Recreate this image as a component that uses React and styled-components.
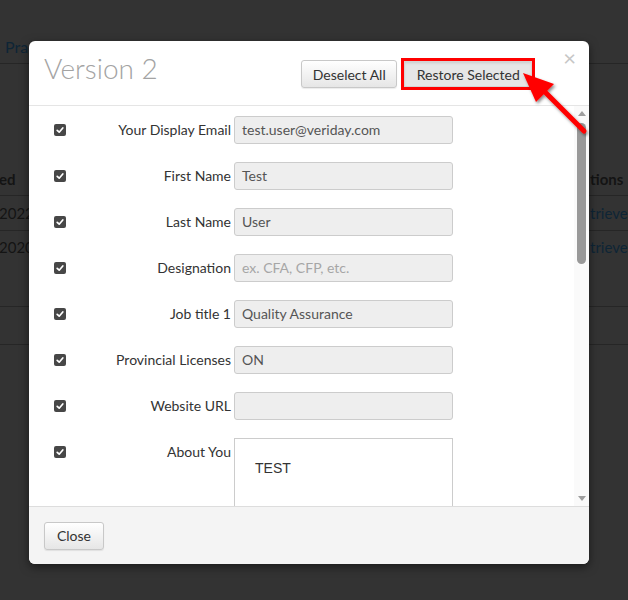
import React from "react";
import styled, { createGlobalStyle } from "styled-components";

const GlobalStyle = createGlobalStyle`
  html, body { margin: 0; padding: 0; }
  body {
    width: 628px;
    height: 600px;
    overflow: hidden;
    background: #333333;
    font-family: Lato, "Open Sans", sans-serif;
  }
`;

const fields = [
  { label: "Your Display Email", value: "test.user@veriday.com" },
  { label: "First Name", value: "Test" },
  { label: "Last Name", value: "User" },
  { label: "Designation", placeholder: "ex. CFA, CFP, etc." },
  { label: "Job title 1", value: "Quality Assurance" },
  { label: "Provincial Licenses", value: "ON" },
  { label: "Website URL", value: "" },
];

const App = () => {
  return (
    <Page>
      <GlobalStyle />
      <TopNav>
        <NavLink>Practice</NavLink>
      </TopNav>
      <Table>
        <TRow $h={34}>
          <Cell $bold>ed</Cell>
          <Cell $bold>tions</Cell>
        </TRow>
        <TRow $h={35}>
          <Cell>2022,</Cell>
          <Cell $link>trieve</Cell>
        </TRow>
        <TRow $h={76} $top>
          <Cell>2020</Cell>
          <Cell $link>trieve</Cell>
        </TRow>
        <TRow $h={38} />
      </Table>

      <Modal>
        <Header>
          <Title>Version 2</Title>
          <ButtonGroup>
            <Button $w={96}>Deselect All</Button>
            <RestoreButton>Restore Selected</RestoreButton>
          </ButtonGroup>
          <CloseX>×</CloseX>
        </Header>
        <Body>
          <FieldList>
            {fields.map((f) => (
              <FieldRow key={f.label}>
                <Check />
                <Label>{f.label}</Label>
                <Input $placeholder={!!f.placeholder}>
                  {f.placeholder || f.value}
                </Input>
              </FieldRow>
            ))}
            <FieldRow $top>
              <Check $top />
              <Label>About You</Label>
              <TextArea>TEST</TextArea>
            </FieldRow>
          </FieldList>
          <ScrollBar>
            <ArrowUp />
            <Thumb />
            <Track />
            <ArrowDown />
          </ScrollBar>
        </Body>
        <Footer>
          <Button $w={60}>Close</Button>
        </Footer>
      </Modal>

      <Annotation viewBox="0 0 628 600">
        <defs>
          <filter id="sh" x="-20%" y="-20%" width="140%" height="140%">
            <feDropShadow dx="1.5" dy="2" stdDeviation="1.5" floodColor="#000" floodOpacity="0.45" />
          </filter>
        </defs>
        <g filter="url(#sh)">
          <line x1="544" y1="91" x2="584" y2="131" stroke="#ff0000" strokeWidth="5" strokeLinecap="round" />
          <polygon points="523,73 554,84 536,102" fill="#ff0000" />
        </g>
      </Annotation>
    </Page>
  );
};

const Check = ({ $top }) => (
  <CheckBox $top={$top}>
    <svg width="10" height="10" viewBox="0 0 10 10">
      <path d="M2.2 5.3 L4.2 7.2 L7.8 3" stroke="#fff" strokeWidth="1.7" fill="none" strokeLinecap="round" strokeLinejoin="round" />
    </svg>
  </CheckBox>
);

export default App;

const Page = styled.div`
  position: relative;
  width: 628px;
  height: 600px;
  overflow: hidden;
  background: #333333;
`;

const TopNav = styled.div`
  height: 64px;
  box-sizing: border-box;
  border-bottom: 1px solid #262626;
  display: flex;
  align-items: flex-end;
  padding: 0 0 7px 5px;
`;

const NavLink = styled.span`
  font-size: 16px;
  color: #0e2536;
`;

const Table = styled.div`
  margin-top: 98px;
  display: flex;
  flex-direction: column;
`;

const TRow = styled.div`
  display: flex;
  justify-content: space-between;
  align-items: ${(p) => (p.$top ? "flex-start" : "center")};
  height: ${(p) => p.$h}px;
  padding-top: ${(p) => (p.$top ? 7 : 0)}px;
  box-sizing: border-box;
  border-bottom: 1px solid #262626;
`;

const Cell = styled.span`
  font-size: 15px;
  font-weight: ${(p) => (p.$bold ? 700 : 400)};
  color: ${(p) => (p.$link ? "#0e2536" : "#141414")};
  width: 38px;
  overflow: hidden;
  white-space: nowrap;
  &:first-child { margin-left: -1px; }
`;

const Modal = styled.div`
  position: absolute;
  top: 41px;
  left: 29px;
  width: 560px;
  height: 523px;
  background: #fff;
  border-radius: 6px;
  box-shadow: 0 3px 10px rgba(0, 0, 0, 0.5);
  display: flex;
  flex-direction: column;
  overflow: hidden;
`;

const Header = styled.div`
  height: 65px;
  box-sizing: border-box;
  border-bottom: 1px solid #e5e5e5;
  display: flex;
  align-items: center;
  padding: 0 13px 0 15px;
`;

const Title = styled.h3`
  margin: -10px 0 0 0;
  font-size: 28px;
  font-weight: 300;
  color: #a3a3a3;
  letter-spacing: 0;
`;

const ButtonGroup = styled.div`
  margin-left: auto;
  display: flex;
  align-items: center;
  gap: 4px;
  margin-top: 2px;
`;

const Button = styled.button`
  font-family: Lato, sans-serif;
  font-size: 14px;
  color: #333;
  height: 28px;
  width: ${(p) => (p.$w ? `${p.$w}px` : "auto")};
  padding: 0;
  border: 1px solid #c8c8c8;
  border-radius: 3px;
  background: linear-gradient(#ffffff, #e6e6e6);
  box-shadow: 0 1px 1px rgba(0, 0, 0, 0.08);
`;

const RestoreButton = styled(Button)`
  height: 32px;
  width: 134px;
  border: 3px solid #ff0000;
  border-radius: 0;
  background: #e6e6e6;
  box-shadow: inset 0 0 0 1px #d4d4d4, inset 0 2px 3px rgba(0, 0, 0, 0.12);
`;

const CloseX = styled.span`
  align-self: flex-start;
  margin-top: 6px;
  margin-left: 28px;
  font-size: 22px;
  color: #c6c6c6;
  line-height: 1;
`;

const Body = styled.div`
  height: 400px;
  display: flex;
  overflow: hidden;
`;

const FieldList = styled.div`
  flex: 1;
  display: flex;
  flex-direction: column;
  gap: 18px;
  padding: 10px 0 0 25px;
`;

const FieldRow = styled.div`
  display: grid;
  grid-template-columns: 12px 168px 219px;
  align-items: ${(p) => (p.$top ? "start" : "center")};
  min-height: 28px;
`;

const CheckBox = styled.span`
  width: 12px;
  height: 12px;
  border-radius: 2px;
  background: #474747;
  display: flex;
  align-items: center;
  justify-content: center;
  margin-top: ${(p) => (p.$top ? "8px" : "0")};
`;

const Label = styled.label`
  font-size: 14px;
  color: #333;
  text-align: right;
  padding-right: 3px;
  line-height: 28px;
  white-space: nowrap;
`;

const Input = styled.div`
  height: 28px;
  box-sizing: border-box;
  border: 1px solid #cccccc;
  border-radius: 3px;
  background: #eeeeee;
  padding: 0 7px;
  font-size: 14px;
  line-height: 26px;
  color: ${(p) => (p.$placeholder ? "#a6a6a6" : "#555")};
  white-space: nowrap;
  overflow: hidden;
`;

const TextArea = styled.div`
  height: 100px;
  box-sizing: border-box;
  border: 1px solid #cccccc;
  background: #fff;
  padding: 20px 20px;
  font-family: "Liberation Sans", Arial, sans-serif;
  font-size: 14px;
  line-height: 18px;
  color: #333;
`;

const ScrollBar = styled.div`
  width: 15px;
  background: #fafafa;
  display: flex;
  flex-direction: column;
  align-items: center;
  padding: 5px 0 5px 0;
  box-sizing: border-box;
`;

const ArrowUp = styled.span`
  width: 0;
  height: 0;
  border-left: 4px solid transparent;
  border-right: 4px solid transparent;
  border-bottom: 5px solid #9e9e9e;
  margin-bottom: 7px;
`;

const ArrowDown = styled.span`
  width: 0;
  height: 0;
  border-left: 4px solid transparent;
  border-right: 4px solid transparent;
  border-top: 5px solid #9e9e9e;
`;

const Thumb = styled.span`
  width: 9px;
  height: 141px;
  border-radius: 5px;
  background: #999999;
`;

const Track = styled.span`
  flex: 1;
`;

const Footer = styled.div`
  flex: 1;
  background: #f4f4f4;
  border-top: 1px solid #dddddd;
  display: flex;
  align-items: center;
  padding: 0 15px;
`;

const Annotation = styled.svg`
  position: absolute;
  top: 0;
  left: 0;
  width: 628px;
  height: 600px;
  pointer-events: none;
`;
